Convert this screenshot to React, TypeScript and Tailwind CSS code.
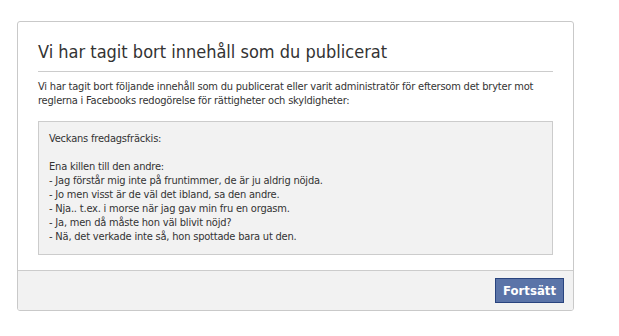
import React from 'react';

const lines = [
  'Veckans fredagsfräckis:',
  '',
  'Ena killen till den andre:',
  '- Jag förstår mig inte på fruntimmer, de är ju aldrig nöjda.',
  '- Jo men visst är de väl det ibland, sa den andre.',
  '- Nja.. t.ex. i morse när jag gav min fru en orgasm.',
  '- Ja, men då måste hon väl blivit nöjd?',
  '- Nä, det verkade inte så, hon spottade bara ut den.',
];

const App: React.FC = () => {
  return (
    <div
      className="min-h-[336px] bg-white pl-[17px] pt-[21px] text-[#333]"
      style={{ fontFamily: '"DejaVu Sans Condensed", "DejaVu Sans", sans-serif' }}
    >
      <div className="w-[557px] overflow-hidden rounded-[3px] border border-[#c9c9c9] bg-white">
        {/* Body */}
        <div className="px-5 pt-5 pb-[15px]">
          <h2 className="border-b border-[#ccc] pb-[9px] text-[18px] leading-[20px] font-normal text-[#333]">
            Vi har tagit bort innehåll som du publicerat
          </h2>
          <p className="mt-2 text-[11px] leading-[14px] tracking-[-0.2px]">
            Vi har tagit bort följande innehåll som du publicerat eller varit administratör för eftersom det bryter mot
            reglerna i Facebooks redogörelse för rättigheter och skyldigheter:
          </p>
          <div className="mt-[13px] border border-[#ccc] bg-[#f2f2f2] p-[10px] text-[11px] leading-[14px] tracking-[-0.2px]">
            {lines.map((line, i) => (
              <div key={i} className="h-[14px] whitespace-pre">
                {line}
              </div>
            ))}
          </div>
        </div>

        {/* Footer */}
        <div className="flex justify-end border-t border-[#ccc] bg-[#f2f2f2] px-[9px] py-[7px]">
          <button className="h-[25px] border border-[#29447e] bg-[#5b74a8] px-[7px] text-[13px] font-bold text-white">
            Fortsätt
          </button>
        </div>
      </div>
    </div>
  );
};

export default App;
